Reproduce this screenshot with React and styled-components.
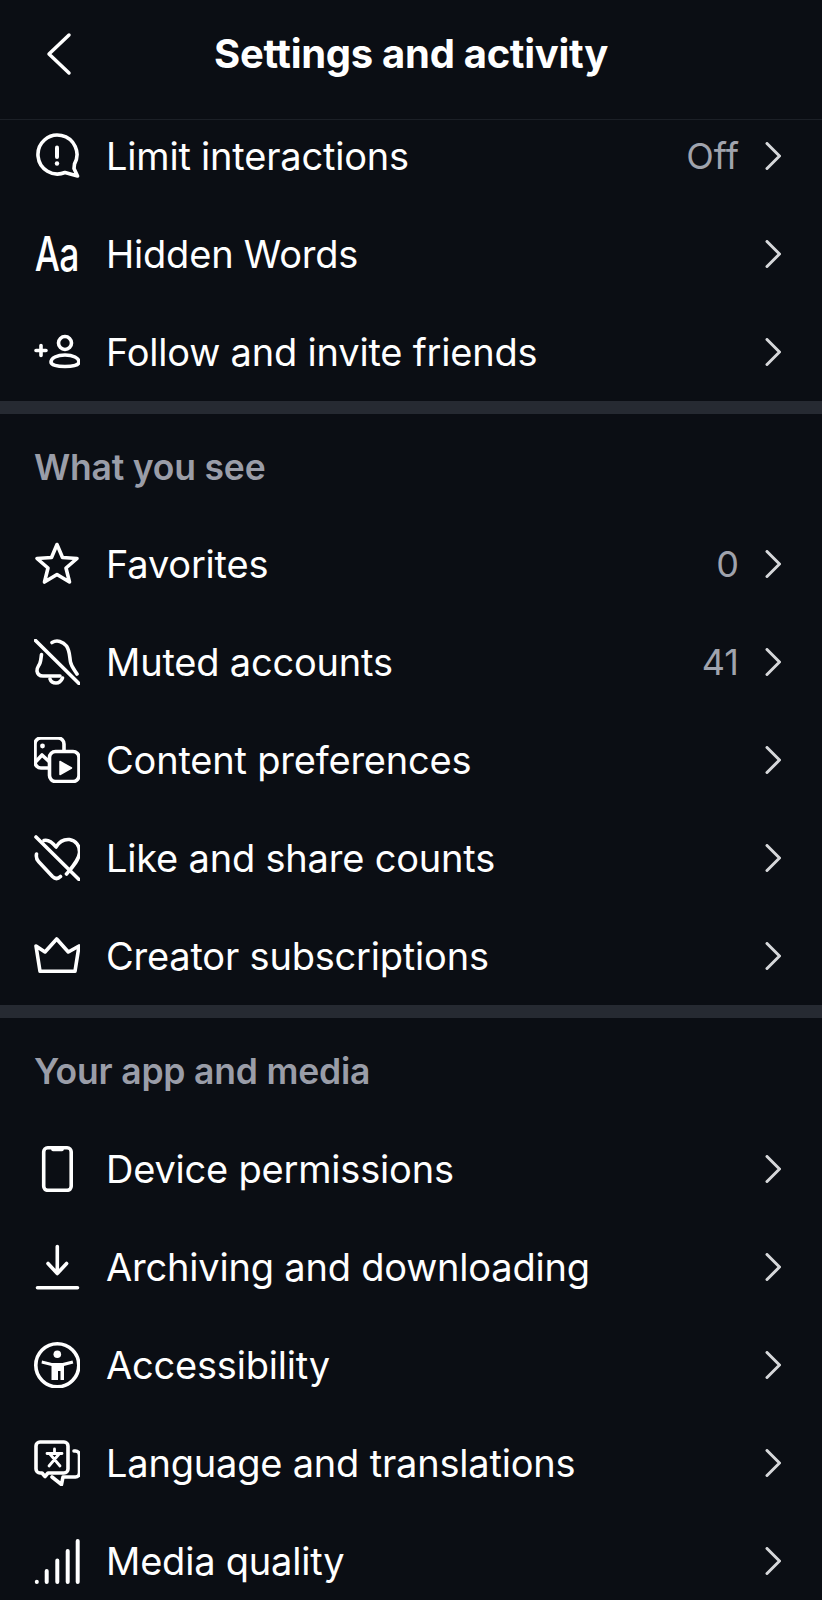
import React from "react";
import styled, { createGlobalStyle } from "styled-components";

const Global = createGlobalStyle`
  html, body { margin: 0; padding: 0; background: #0b0e14; }
  body { font-family: Inter, "Noto Sans", sans-serif; color: #fff; }
`;

const Page = styled.div`
  width: 822px;
  height: 1600px;
  overflow: hidden;
  background: #0b0e14;
`;

const Header = styled.header`
  position: relative;
  z-index: 1;
  display: flex;
  align-items: center;
  justify-content: center;
  background: #0b0e14;
  border-bottom: 1px solid #1c2027;
  padding-bottom: 12px;
  height: 107px;
`;

const BackButton = styled.button`
  position: absolute;
  left: 46px;
  top: 31px;
  width: 26px;
  height: 46px;
  padding: 0;
  border: 0;
  background: none;
  display: flex;
`;

const Title = styled.h1`
  margin: 0;
  font-size: 40px;
  font-weight: 700;
  letter-spacing: -0.3px;
  line-height: 46px;
  color: #fff;
`;

const List = styled.main`
  margin-top: -13px;
`;

const Row = styled.div`
  height: 98px;
  display: flex;
  align-items: center;
  padding: 0 41px 0 34px;
`;

const IconBox = styled.span`
  width: 46px;
  height: 46px;
  flex: none;
  display: flex;
  align-items: center;
  justify-content: center;
  position: relative;
`;

const Icon = styled.svg.attrs({ viewBox: "0 0 46 46", width: 46, height: 46, fill: "none" })`
  display: block;
  stroke: #fff;
  stroke-width: 3.6;
  stroke-linecap: round;
  stroke-linejoin: round;
`;

const AaGlyph = styled.span`
  font-size: 48px;
  line-height: 46px;
  font-weight: 500;
  letter-spacing: -1px;
  white-space: nowrap;
  transform: scaleX(0.74);
  color: #fff;
`;

const Label = styled.span`
  margin-left: 26px;
  flex: 1;
  font-size: 38px;
  font-weight: 400;
  letter-spacing: -0.2px;
  line-height: 46px;
  color: #fff;
  white-space: nowrap;
`;

const Value = styled.span`
  font-size: 36px;
  line-height: 46px;
  color: #a0a3ad;
  margin-right: 26px;
`;

const Chevron = styled.svg.attrs({ viewBox: "0 0 16 28", width: 16, height: 28, fill: "none" })`
  flex: none;
  stroke: #d6d7da;
  stroke-width: 3;
  stroke-linecap: round;
  stroke-linejoin: round;
`;

const Divider = styled.div`
  height: 12.5px;
  background: #262a32;
`;

const SectionHead = styled.h2`
  margin: 0;
  height: ${(p) => p.$h}px;
  box-sizing: border-box;
  padding: 6px 34px 0;
  display: flex;
  align-items: center;
  font-size: 35.5px;
  font-weight: 600;
  letter-spacing: -0.2px;
  color: #9a9da8;
`;

const icons = {
  limit: (
    <Icon>
      <path d="M31 39.5A19.5 19.5 0 1 1 40.5 31L40 35.5l3.5 7.5Z" />
      <path d="M23 14.5V24" strokeWidth="4" />
      <circle cx="23" cy="30.5" r="2.2" fill="#fff" stroke="none" />
    </Icon>
  ),
  aa: <AaGlyph>Aa</AaGlyph>,
  follow: (
    <Icon>
      <circle cx="31" cy="14" r="6.5" />
      <path d="M31 26c8 0 14 3 14 7 0 3-6 4.500-14 4.500s-14-1.500-14-4.500c0-4 6-7 14-7Z" />
      <path d="M2 21.500h10M7 16.500v10" />
    </Icon>
  ),
  star: (
    <Icon>
      <path d="M23 3.500 28.500 16.500 43 17.500 32 27 35.500 41 23 33.500 10.500 41 14 27 3 17.500 17.500 16.500Z" />
    </Icon>
  ),
  bell: (
    <Icon>
      <path d="M18 3.500c5-3 11-1 14.500 3.500 3.500 5 3 11 4 16 1 5 4 8 6.500 12" />
      <path d="M7.500 15.500c-.5 3-.5 6-1.500 8.500-1 3-3.500 4.500-3 8 .5 3.500 3 5 6 5h17" />
      <path d="M16 40c1 3 3.500 4 6 4s5-1.500 6.500-5" />
      <path d="M1.500 1.500 45 44.500" />
    </Icon>
  ),
  content: (
    <Icon>
      <path d="M14 31H7a6 6 0 0 1-6-6V7a6 6 0 0 1 6-6h17a6 6 0 0 1 6 6v7" />
      <rect x="15.500" y="14.500" width="29.500" height="30" rx="6" />
      <path d="M1.500 25 8 18l6.500 6" />
      <circle cx="8.500" cy="9" r="2.400" fill="#fff" stroke="none" />
      <path d="M26 24.500 37.500 31 26 37.500Z" fill="#fff" strokeWidth="1.500" />
    </Icon>
  ),
  heart: (
    <Icon>
      <path d="M10 5.500c4-1 8 1.500 12 6.500 3-5 8-8 13.500-7.500C42 5.500 46 11 45.500 18c-.5 7-7 14-13 21" />
      <path d="M2.500 19c-.5 3 0 5.500 2 7.500l14 15c2.500 2.500 5 3 8 0" />
      <path d="M2 2 45 44.500" />
    </Icon>
  ),
  crown: (
    <Icon>
      <path d="M2 13 11 19 22.700 6 34.300 19 45 13 41 38.300H6Z" />
    </Icon>
  ),
  device: (
    <Icon>
      <rect x="9.700" y="1.800" width="27.500" height="42.500" rx="4" />
      <path d="M19 3.500h9" />
    </Icon>
  ),
  archive: (
    <Icon>
      <path d="M23.300 2.500V29.500M14 19.500l9.300 10 9.300-10" />
      <path d="M3.500 43.700h40" />
    </Icon>
  ),
  access: (
    <Icon>
      <circle cx="23.300" cy="23.300" r="21.500" />
      <circle cx="23.300" cy="12.300" r="3.800" fill="#fff" stroke="none" />
      <path
        d="M8 18.500 18 21h10.500l10-2.500.8 3-9.300 2.500v14h-3.500v-9h-2.500v9H17.500V24l-10-2.500Z"
        fill="#fff"
        stroke="none"
      />
    </Icon>
  ),
  language: (
    <Icon>
      <path d="M6 2h24a4 4 0 0 1 4 4v23a4 4 0 0 1-4 4H14l-3 3.500L8 33H6a4 4 0 0 1-4-4V6a4 4 0 0 1 4-4Z" />
      <path d="M40 11h1.500a4 4 0 0 1 4 4v18a4 4 0 0 1-4 4H29l-1.500 7.500-9.500-7.500" />
      <path d="M13 13.500h15M20.500 9v4.500M15 26l10.500-12.500M26 26 15.500 13.500" strokeWidth="2.800" />
    </Icon>
  ),
  media: (
    <Icon>
      <path d="M2.800 43.800v.2M12.700 33v11M23.300 22.500v21.500M33.700 13v31M43.700 3v41" strokeWidth="4" />
    </Icon>
  ),
};

const SettingRow = ({ icon, label, value }) => (
  <Row>
    <IconBox>{icons[icon]}</IconBox>
    <Label>{label}</Label>
    {value && <Value>{value}</Value>}
    <Chevron>
      <path d="M2 1.500 14.500 14 2 26.500" />
    </Chevron>
  </Row>
);

const groups = [
  {
    rows: [
      { icon: "limit", label: "Limit interactions", value: "Off" },
      { icon: "aa", label: "Hidden Words" },
      { icon: "follow", label: "Follow and invite friends" },
    ],
  },
  {
    title: "What you see",
    h: 101.5,
    rows: [
      { icon: "star", label: "Favorites", value: "0" },
      { icon: "bell", label: "Muted accounts", value: "41" },
      { icon: "content", label: "Content preferences" },
      { icon: "heart", label: "Like and share counts" },
      { icon: "crown", label: "Creator subscriptions" },
    ],
  },
  {
    title: "Your app and media",
    h: 102.5,
    rows: [
      { icon: "device", label: "Device permissions" },
      { icon: "archive", label: "Archiving and downloading" },
      { icon: "access", label: "Accessibility" },
      { icon: "language", label: "Language and translations" },
      { icon: "media", label: "Media quality" },
    ],
  },
];

export default function App() {
  return (
    <Page>
      <Global />
      <Header>
        <BackButton aria-label="Back">
          <svg viewBox="0 0 26 46" width="26" height="46" fill="none" stroke="#fff" strokeWidth="3.500" strokeLinecap="round" strokeLinejoin="round">
            <path d="M23 4 3 23 23 42" />
          </svg>
        </BackButton>
        <Title>Settings and activity</Title>
      </Header>
      <List>
        {groups.map((g, i) => (
          <section key={i}>
            {i > 0 && <Divider />}
            {g.title && <SectionHead $h={g.h}>{g.title}</SectionHead>}
            {g.rows.map((r) => (
              <SettingRow key={r.label} {...r} />
            ))}
          </section>
        ))}
      </List>
    </Page>
  );
}
